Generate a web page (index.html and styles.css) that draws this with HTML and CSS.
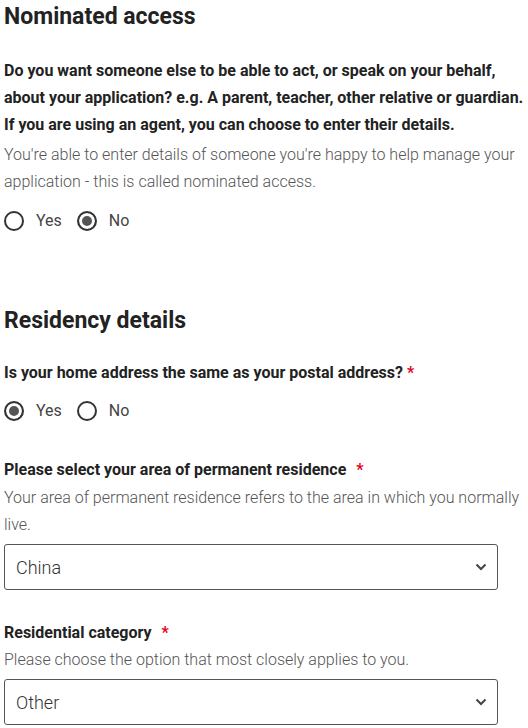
FILE: index.html
```html
<!DOCTYPE html>
<html lang="en">
<head>
<meta charset="utf-8">
<title>Application</title>
<link rel="stylesheet" href="styles.css">
</head>
<body>
<main class="page">
  <section class="section">
    <h2 class="heading">Nominated access</h2>
    <div class="field field--lead">
      <p class="label">Do you want someone else to be able to act, or speak on your behalf, about your application? e.g. A parent, teacher, other relative or guardian. If you are using an agent, you can choose to enter their details.</p>
      <p class="hint hint--spaced">You're able to enter details of someone you're happy to help manage your application - this is called nominated access.</p>
      <div class="radios radios--spaced">
        <label class="radio"><input type="radio" name="nominated" class="radio-input"><span class="radio-text">Yes</span></label>
        <label class="radio"><input type="radio" name="nominated" class="radio-input" checked><span class="radio-text">No</span></label>
      </div>
    </div>
  </section>

  <section class="section section--next">
    <h2 class="heading">Residency details</h2>
    <div class="field field--first">
      <p class="label">Is your home address the same as your postal address?<span class="req">*</span></p>
      <div class="radios">
        <label class="radio"><input type="radio" name="same" class="radio-input" checked><span class="radio-text">Yes</span></label>
        <label class="radio"><input type="radio" name="same" class="radio-input"><span class="radio-text">No</span></label>
      </div>
    </div>
    <div class="field field--after-radios">
      <p class="label">Please select your area of permanent residence <span class="req req--wide">*</span></p>
      <p class="hint">Your area of permanent residence refers to the area in which you normally live.</p>
      <div class="select-wrap">
        <select class="select"><option>China</option></select>
        <svg class="chevron" width="12" height="8" viewBox="0 0 12 8"><path d="M1.5 1.5 L6 6 L10.5 1.5" fill="none" stroke="#444" stroke-width="2"/></svg>
      </div>
    </div>
    <div class="field field--after-select">
      <p class="label">Residential category <span class="req req--wide">*</span></p>
      <p class="hint hint--tight">Please choose the option that most closely applies to you.</p>
      <div class="select-wrap">
        <select class="select"><option>Other</option></select>
        <svg class="chevron" width="12" height="8" viewBox="0 0 12 8"><path d="M1.5 1.5 L6 6 L10.5 1.5" fill="none" stroke="#444" stroke-width="2"/></svg>
      </div>
    </div>
  </section>
</main>
</body>
</html>
```

FILE: styles.css
```css
* { box-sizing: border-box; }
html, body { margin: 0; padding: 0; background: #fff; }
body {
  font-family: Roboto, "Liberation Sans", Arial, sans-serif;
  font-size: 16px;
  line-height: 27px;
  color: #222;
}
.page { padding: 0 4px; }
.section--next { margin-top: 71px; }
.heading {
  margin: 0;
  font-size: 23px;
  line-height: 34px;
  font-weight: 700;
  color: #222;
}
.field--lead { margin-top: 23px; }
.field--first { margin-top: 21px; }
.field--after-radios { margin-top: 33px; }
.field--after-select { margin-top: 29px; }
.label {
  margin: 0;
  font-weight: 700;
  color: #222;
}
.req { color: #e3001b; font-weight: 700; margin-left: 4px; }
.req--wide { margin-left: 6px; }
.hint {
  margin: 1px 0 0;
  font-weight: 300;
  color: #555;
}
.hint--spaced { margin-top: 3px; }
.hint--tight { margin-top: 0; }
.radios {
  display: flex;
  align-items: center;
  gap: 15px;
  margin-top: 13px;
  height: 24px;
}
.radios--spaced { margin-top: 14px; }
.radio {
  display: flex;
  align-items: center;
  gap: 12px;
  line-height: 24px;
  color: #444;
  cursor: pointer;
}
.radio-input {
  appearance: none;
  -webkit-appearance: none;
  margin: 0;
  width: 20px;
  height: 20px;
  border: 2px solid #333;
  border-radius: 50%;
  background: #fff;
}
.radio-input:checked {
  background: #555;
  box-shadow: inset 0 0 0 3px #fff;
}
.select-wrap {
  position: relative;
  width: 494px;
  margin-top: 6px;
}
.select {
  appearance: none;
  -webkit-appearance: none;
  display: block;
  width: 100%;
  height: 46px;
  margin: 0;
  padding: 0 40px 0 11px;
  border: 1px solid #555;
  border-radius: 3px;
  background: #fff;
  font-family: inherit;
  font-size: 18px;
  font-weight: 300;
  color: #333;
}
.chevron {
  position: absolute;
  right: 11px;
  top: 19px;
  pointer-events: none;
}
```
